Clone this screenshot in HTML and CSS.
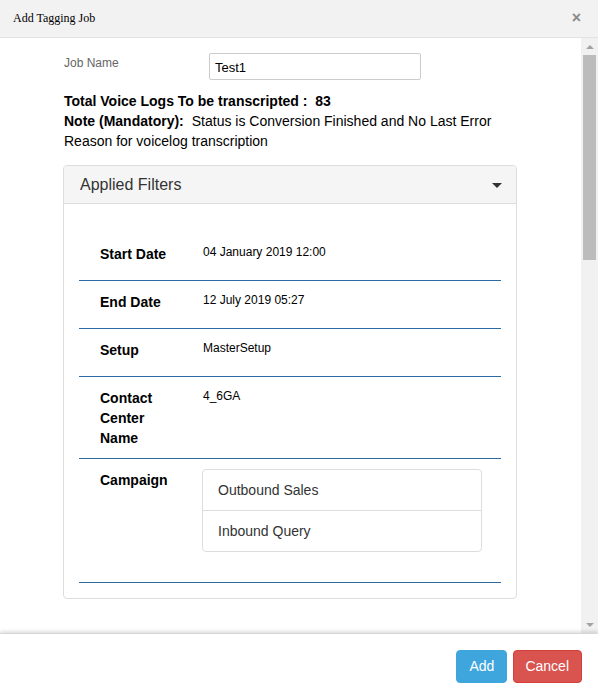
FILE: index.html
```html
<!DOCTYPE html>
<html>
<head>
<meta charset="utf-8">
<link rel="stylesheet" href="styles.css">
</head>
<body>
<div class="modal">
  <div class="modal-header">
    <span class="modal-title">Add Tagging Job</span>
    <span class="close">&times;</span>
  </div>
  <div class="body-wrap">
    <div class="content">
      <div class="inner">
        <div class="job-row">
          <label class="job-label">Job Name</label>
          <div class="job-input">Test1</div>
        </div>
        <div class="total">Total Voice Logs To be transcripted :&nbsp; 83</div>
        <div class="note"><b class="note-key">Note (Mandatory):</b>Status is Conversion Finished and No Last Error Reason for voicelog transcription</div>
        <div class="panel">
          <div class="panel-heading">
            <span class="panel-title">Applied Filters</span>
            <span class="caret"></span>
          </div>
          <div class="panel-body">
            <div class="frow">
              <div class="flabel">Start Date</div>
              <div class="fvalue">04 January 2019 12:00</div>
            </div>
            <div class="frow">
              <div class="flabel">End Date</div>
              <div class="fvalue">12 July 2019 05:27</div>
            </div>
            <div class="frow">
              <div class="flabel">Setup</div>
              <div class="fvalue">MasterSetup</div>
            </div>
            <div class="frow">
              <div class="flabel">Contact Center Name</div>
              <div class="fvalue">4_6GA</div>
            </div>
            <div class="frow">
              <div class="flabel">Campaign</div>
              <div class="fvalue">
                <ul class="list-group">
                  <li class="list-item">Outbound Sales</li>
                  <li class="list-item">Inbound Query</li>
                </ul>
              </div>
            </div>
          </div>
        </div>
      </div>
    </div>
    <div class="scrollbar">
      <div class="sb-btn"><span class="tri-up"></span></div>
      <div class="sb-thumb"></div>
      <div class="sb-track"></div>
      <div class="sb-btn"><span class="tri-down"></span></div>
    </div>
  </div>
  <div class="modal-footer">
    <button class="btn btn-add">Add</button>
    <button class="btn btn-cancel">Cancel</button>
  </div>
</div>
</body>
</html>
```

FILE: styles.css
```css
html, body {
  margin: 0;
  padding: 0;
}
body {
  width: 598px;
  height: 699px;
  overflow: hidden;
  background: #fff;
  font-family: "Liberation Sans", Arial, sans-serif;
}
.modal {
  display: flex;
  flex-direction: column;
  width: 598px;
  height: 699px;
}
.modal-header {
  height: 37px;
  flex: 0 0 37px;
  background: #f2f2f2;
  border-bottom: 1px solid #e3e3e3;
  display: flex;
  align-items: center;
  justify-content: space-between;
  padding: 0 17px 0 13px;
}
.modal-title {
  font-family: "Liberation Serif", "Times New Roman", serif;
  font-size: 12px;
  color: #000;
}
.close {
  font-family: "Liberation Sans", Arial, sans-serif;
  font-size: 16px;
  font-weight: bold;
  color: #8a8a8a;
  line-height: 1;
  margin-top: -2px;
}
.body-wrap {
  flex: 1 1 auto;
  display: flex;
  min-height: 0;
  overflow: hidden;
}
.content {
  flex: 1 1 auto;
  padding: 15px 0 0 63px;
  overflow: hidden;
}
.inner {
  width: 454px;
}
.job-row {
  display: flex;
  align-items: flex-start;
}
.job-label {
  width: 145px;
  margin-left: 1px;
  font-size: 12px;
  color: #666;
  line-height: 17px;
  padding-top: 2px;
}
.job-input {
  width: 200px;
  height: 25px;
  border: 1px solid #ccc;
  border-radius: 2px;
  padding: 0 5px;
  font-size: 13px;
  line-height: 27px;
  color: #000;
}
.total {
  margin: 11px 0 0 1px;
  font-size: 14px;
  font-weight: bold;
  line-height: 20px;
  color: #000;
}
.note {
  margin-left: 1px;
  font-size: 14px;
  line-height: 20px;
  color: #000;
}
.note-key {
  margin-right: 8px;
}
.panel {
  margin-top: 14px;
  border: 1px solid #ddd;
  border-radius: 4px;
  background: #fff;
}
.panel-heading {
  height: 37px;
  background: #f5f5f5;
  border-bottom: 1px solid #ddd;
  border-radius: 3px 3px 0 0;
  display: flex;
  align-items: center;
  justify-content: space-between;
  padding: 0 14px 0 16px;
}
.panel-title {
  font-size: 16px;
  color: #333;
}
.caret {
  width: 0;
  height: 0;
  border-left: 5px solid transparent;
  border-right: 5px solid transparent;
  border-top: 5px solid #333;
  margin-top: 1px;
}
.panel-body {
  padding: 29px 15px 15px 15px;
}
.frow {
  display: grid;
  grid-template-columns: 124px 1fr;
  box-sizing: border-box;
  min-height: 48px;
  padding: 11px 0 10px 0;
  border-bottom: 1px solid #2e6aa2;
}
.flabel {
  padding: 0 22px 0 21px;
  font-size: 14px;
  font-weight: bold;
  line-height: 20px;
  color: #000;
}
.fvalue {
  font-size: 12px;
  line-height: 14px;
  color: #000;
  padding-top: 1px;
}
.list-group {
  list-style: none;
  margin: -2px 0 20px -1px;
  padding: 0;
  width: 278px;
  border: 1px solid #ddd;
  border-radius: 4px;
}
.list-item {
  padding: 10px 15px;
  font-size: 14px;
  line-height: 20px;
  color: #333;
}
.list-item + .list-item {
  border-top: 1px solid #ddd;
}
.scrollbar {
  flex: 0 0 17px;
  width: 17px;
  background: #f1f1f1;
  display: flex;
  flex-direction: column;
}
.sb-btn {
  height: 17px;
  flex: 0 0 17px;
  display: flex;
  align-items: center;
  justify-content: center;
}
.tri-up {
  width: 0;
  height: 0;
  border-left: 4px solid transparent;
  border-right: 4px solid transparent;
  border-bottom: 4px solid #a3a3a3;
}
.tri-down {
  width: 0;
  height: 0;
  border-left: 4px solid transparent;
  border-right: 4px solid transparent;
  border-top: 4px solid #a3a3a3;
}
.sb-thumb {
  flex: 0 0 205px;
  margin: 0 2px;
  background: #bcbcbc;
}
.sb-track {
  flex: 1 1 auto;
}
.modal-footer {
  flex: 0 0 66px;
  height: 66px;
  box-sizing: border-box;
  border-top: 1px solid #d6d6d6;
  box-shadow: 0 -2px 3px rgba(0, 0, 0, 0.12);
  position: relative;
  display: flex;
  justify-content: flex-end;
  align-items: flex-start;
  gap: 6px;
  padding: 16px 16px 0 0;
  background: #fff;
}
.btn {
  font-family: "Liberation Sans", Arial, sans-serif;
  font-size: 14px;
  line-height: 19px;
  padding: 6px 12px;
  border-radius: 4px;
  color: #fff;
  cursor: pointer;
}
.btn-add {
  background: #3fa6dd;
  border: 1px solid #3fa6dd;
}
.btn-cancel {
  background: #d9534f;
  border: 1px solid #d43f3a;
  padding: 6px 12px 6px 11px;
}
```
